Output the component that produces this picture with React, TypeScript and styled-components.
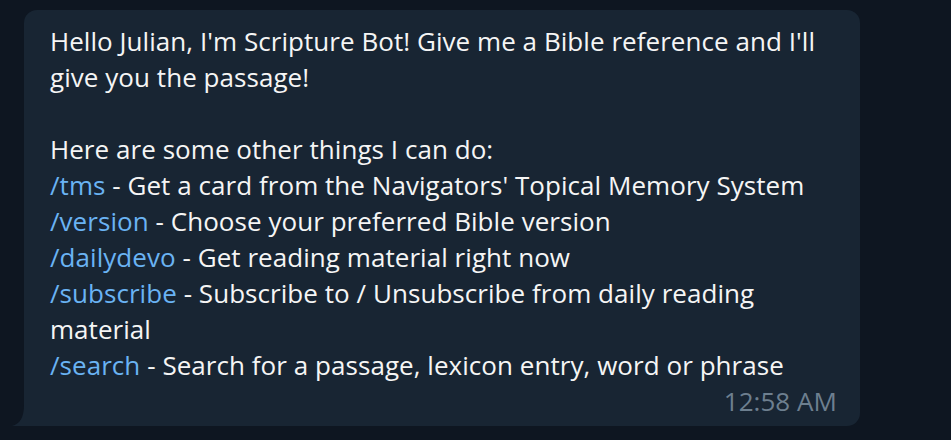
import { createGlobalStyle, styled } from "styled-components";

const GlobalStyle = createGlobalStyle`
  html, body {
    margin: 0;
    padding: 0;
    background: #0e1621;
  }
  body {
    font-family: "Open Sans", "Noto Sans", sans-serif;
  }
`;

const Chat = styled.div`
  display: flex;
  align-items: flex-start;
  padding: 10px 0 0 24px;
  min-height: 440px;
  box-sizing: border-box;
`;

const Bubble = styled.div`
  position: relative;
  width: 836px;
  box-sizing: border-box;
  padding: 13px 23px 7px 26px;
  background: #182533;
  border-radius: 13px 13px 13px 0;
  color: #f5f5f5;
  font-size: 26px;
  line-height: 36px;
  letter-spacing: 0.05px;
`;

const Tail = styled.svg`
  position: absolute;
  left: -12px;
  bottom: 0;
  width: 12px;
  height: 21px;
`;

const Paragraph = styled.p<{ $gap?: boolean }>`
  margin: 0 0 ${(p) => (p.$gap ? "36px" : "0")};
`;

const Line = styled.div``;

const Command = styled.a`
  color: #6ab3f3;
  text-decoration: none;
`;

const Time = styled.div`
  text-align: right;
  color: #6d7f8f;
`;

const commands: [string, string][] = [
  ["/tms", "Get a card from the Navigators' Topical Memory System"],
  ["/version", "Choose your preferred Bible version"],
  ["/dailydevo", "Get reading material right now"],
  ["/subscribe", "Subscribe to / Unsubscribe from daily reading material"],
  ["/search", "Search for a passage, lexicon entry, word or phrase"],
];

const App = () => {
  return (
    <>
      <GlobalStyle />
      <Chat>
        <Bubble>
          <Tail viewBox="0 0 12 21">
            <path d="M12 0 C12 12 8 19 0 21 L12 21 Z" fill="#182533" />
          </Tail>
          <Paragraph $gap>
            Hello Julian, I'm Scripture Bot! Give me a Bible reference and I'll give you the passage!
          </Paragraph>
          <Paragraph>
            <Line>Here are some other things I can do:</Line>
            {commands.map(([cmd, desc]) => (
              <Line key={cmd}>
                <Command href="#">{cmd}</Command> - {desc}
              </Line>
            ))}
          </Paragraph>
          <Time>12:58 AM</Time>
        </Bubble>
      </Chat>
    </>
  );
};

export default App;
